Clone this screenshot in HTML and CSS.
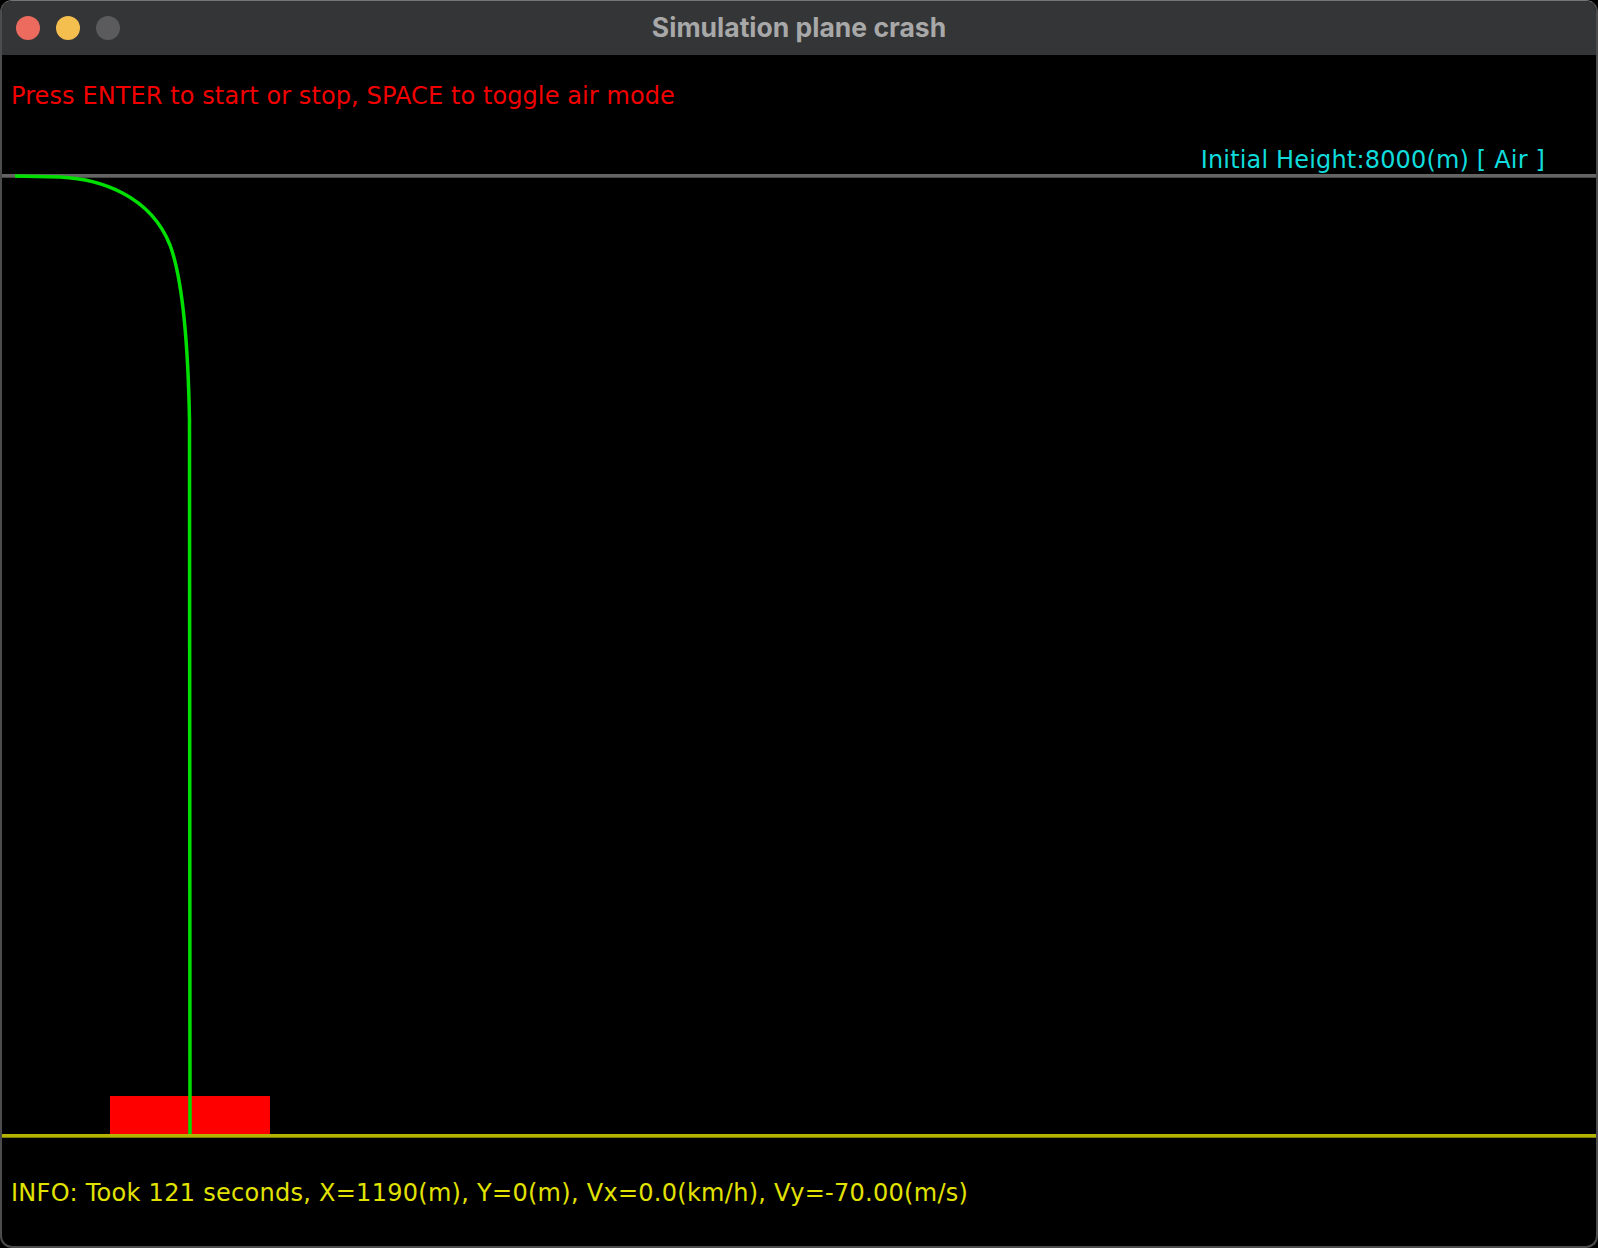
FILE: index.html
```html
<!DOCTYPE html>
<html lang="en">
<head>
	<meta charset="UTF-8">
	<title>Simulation plane crash</title>
	<link rel="stylesheet" href="styles.css">
</head>
<body>
	<div class="window">
		<div class="titlebar">
			<div class="lights">
				<span class="light close"></span>
				<span class="light min"></span>
				<span class="light zoom"></span>
			</div>
			<div class="title">Simulation plane crash</div>
			<div class="spacer"></div>
		</div>
		<div class="screen">
			<p class="hint">Press ENTER to start or stop, SPACE to toggle air mode</p>
			<p class="status">Initial Height:8000(m) [ Air ]</p>
			<svg class="plot" width="1594" height="964" viewBox="2 174 1594 964">
				<!-- 天空上沿 -->
				<rect x="0" y="174" width="1598" height="3.7" fill="#646464"/>
				<!-- 落点 -->
				<rect x="110" y="1096" width="160" height="38" fill="#ff0000"/>
				<!-- 轨迹 -->
				<path d="M15 176 L60 177 C100 179 150 195 170 245 C183 280 188 340 189.5 420 L190 1134"
					fill="none" stroke="#00e000" stroke-width="3.5"/>
				<!-- 地面 -->
				<rect x="0" y="1134" width="1598" height="3.7" fill="#b4b400"/>
			</svg>
			<p class="info">INFO: Took 121 seconds, X=1190(m), Y=0(m), Vx=0.0(km/h), Vy=-70.00(m/s)</p>
		</div>
	</div>
</body>
</html>
```
FILE: styles.css
```css
*{margin: 0; padding: 0;}
body{background: #000;}
.window{width: 1598px; height: 1248px; box-sizing: border-box; border: 2px solid #4c4c4c; border-top: 1px solid #757575; border-radius: 12px; overflow: hidden; display: flex; flex-direction: column; background: #000;}
.titlebar{height: 54px; flex: none; display: flex; align-items: center; background: #343537;}
.lights{width: 118px; box-sizing: border-box; padding-left: 14px; display: flex; gap: 16px;}
.light{display: block; width: 24px; height: 24px; border-radius: 50%;}
.close{background: #ed6a5e;}
.min{background: #f5bf4f;}
.zoom{background: #5b5b5d;}
.title{flex: 1; margin-top: -2px; text-align: center; font: 700 26.5px "Inter", "Liberation Sans", sans-serif; color: #a8a8a8;}
.spacer{width: 118px;}
.screen{flex: 1; display: flex; flex-direction: column; font: 24px/28px "DejaVu Sans", sans-serif;}
.hint{margin-top: 27px; padding-left: 9px; color: #f20000; letter-spacing: 0.1px;}
.status{margin-top: 36px; padding-right: 51px; text-align: right; color: #10dcdc; letter-spacing: 0.17px;}
.plot{display: block;}
.info{margin-top: 41px; padding-left: 9px; color: #e2e200; letter-spacing: 0.28px;}
```
